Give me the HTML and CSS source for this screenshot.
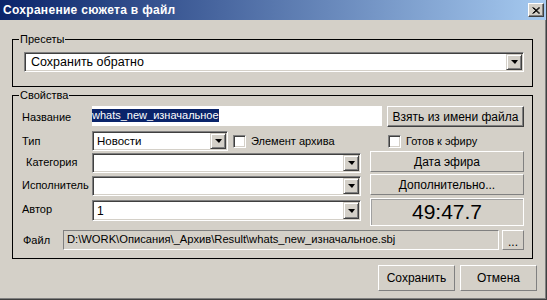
FILE: index.html
```html
<!DOCTYPE html>
<html lang="ru">
<head>
    <meta charset="UTF-8">
    <title>Сохранение сюжета в файл</title>
    <link rel="stylesheet" href="styles.css">
</head>
<body>
    <div class="window">
        <!-- заголовок окна -->
        <div class="titlebar">
            <span class="title">Сохранение сюжета в файл</span>
            <span class="close">
                <svg width="8" height="7" viewBox="0 0 8 7"><path d="M0.5 0.5 L7 6.5 M1.5 0.5 L8 6.5 M7 0.5 L0.5 6.5 M8 0.5 L1.5 6.5" stroke="#000" stroke-width="1"/></svg>
            </span>
        </div>
        <div class="content">
            <!-- пресеты -->
            <fieldset class="group presets">
                <legend>Пресеты</legend>
                <div class="group-body presets-body">
                    <div class="combo combo-preset">
                        <span class="val">Сохранить обратно</span>
                        <span class="drop"><i></i></span>
                    </div>
                </div>
            </fieldset>
            <!-- свойства -->
            <fieldset class="group props">
                <legend>Свойства</legend>
                <div class="group-body props-body">
                    <div class="row r1">
                        <span class="lbl">Название</span>
                        <div class="textbox"><span class="sel">whats_new_изначальное</span></div>
                        <button class="btn btn-raised btn-name">Взять из имени файла</button>
                    </div>
                    <div class="row r2">
                        <span class="lbl">Тип</span>
                        <div class="r2-mid">
                            <div class="combo combo-type">
                                <span class="val">Новости</span>
                                <span class="drop"><i></i></span>
                            </div>
                            <span class="check"></span>
                            <span class="check-lbl">Элемент архива</span>
                        </div>
                        <div class="r2-right">
                            <span class="check"></span>
                            <span class="check-lbl">Готов к эфиру</span>
                        </div>
                    </div>
                    <div class="row r3">
                        <span class="lbl lbl-cat">Категория</span>
                        <div class="combo combo-long">
                            <span class="val"></span>
                            <span class="drop"><i></i></span>
                        </div>
                        <button class="btn btn-side">Дата эфира</button>
                    </div>
                    <div class="row r4">
                        <span class="lbl">Исполнитель</span>
                        <div class="combo combo-long">
                            <span class="val"></span>
                            <span class="drop"><i></i></span>
                        </div>
                        <button class="btn btn-side">Дополнительно...</button>
                    </div>
                    <div class="row r5">
                        <span class="lbl lbl-author">Автор</span>
                        <div class="combo combo-long">
                            <span class="val">1</span>
                            <span class="drop"><i></i></span>
                        </div>
                        <div class="timer">49:47.7</div>
                    </div>
                    <div class="row r6">
                        <span class="lbl lbl-file">Файл</span>
                        <div class="path">D:\WORK\Описания\_Архив\Result\whats_new_изначальное.sbj</div>
                        <button class="btn btn-dots">...</button>
                    </div>
                </div>
            </fieldset>
            <div class="actions">
                <button class="btn btn-bottom">Сохранить</button>
                <button class="btn btn-bottom">Отмена</button>
            </div>
        </div>
    </div>
</body>
</html>
```

FILE: styles.css
```css
/* диалог в классическом стиле windows */
*{
    box-sizing: border-box;
}
body{
    margin: 0;
    background: #d4d0c8;
    font-family: "Liberation Sans", Arial, sans-serif;
    font-size: 12px;
    color: #000;
}
.window{
    width: 547px;
    height: 300px;
    background: #d4d0c8;
    border-right: 1px solid #404040;
    border-bottom: 1px solid #404040;
    box-shadow: inset -1px -1px 0 #808080;
}

/* заголовок */
.titlebar{
    height: 20px;
    width: 546px;
    padding: 0 2px 0 3px;
    display: flex;
    align-items: center;
    justify-content: space-between;
    background: linear-gradient(to right, #0a246a, #a6caf0);
}
.title{
    color: #fff;
    font-weight: bold;
    font-size: 12px;
    letter-spacing: 0.3px;
}
.close{
    width: 16px;
    height: 14px;
    display: flex;
    align-items: center;
    justify-content: center;
    background: #d4d0c8;
    border: 1px solid;
    border-color: #fff #404040 #404040 #fff;
    box-shadow: inset -1px -1px 0 #808080;
}

.content{
    padding: 12px 0 0 12px;
}

/* групбоксы */
.group{
    margin: 0;
    padding: 0;
    width: 521px;
    min-width: 0;
    border: 1px solid #000;
}
.group legend{
    margin-left: 6px;
    padding: 0 1px;
    font-size: 11px;
    line-height: 14px;
}
.presets-body{
    padding: 6px 8px 14px 11px;
}
.props{
    margin-top: 1px;
}
.props-body{
    padding: 4px 8px 8px 9px;
}

/* строки */
.row{
    display: flex;
}
.lbl{
    width: 70px;
    flex: none;
    font-size: 11px;
    align-self: center;
}
.lbl-cat{
    padding-left: 4px;
}
.lbl-author{
    align-self: flex-start;
    margin-top: 5px;
}
.lbl-file{
    width: 41px;
    padding-left: 1px;
}
.r1{
    height: 21px;
    gap: 5px;
}
.r1 .lbl{
    margin-right: -5px;
}
.r2{
    height: 20px;
    margin-top: 4px;
}
.r2-mid{
    flex: 1;
    display: flex;
    align-items: center;
}
.r2-right{
    width: 137px;
    padding-left: 1px;
    display: flex;
    align-items: center;
}
.r3{
    height: 22px;
}
.r4{
    height: 23px;
}
.r3 .combo, .r4 .combo{
    align-self: flex-end;
}
.r4 .btn-side{
    margin-top: 1px;
}
.r5{
    height: 28px;
    margin-top: 2px;
}
.r5 .combo{
    height: 21px;
    margin-top: 2px;
}
.r6{
    height: 20px;
    margin-top: 4px;
}

/* поля */
.textbox{
    width: 290px;
    height: 20px;
    background: #fff;
    padding: 2px 0 0 0;
}
.sel{
    display: inline-block;
    background: #0a246a;
    color: #fff;
    line-height: 13px;
    font-size: 11px;
}
.combo{
    display: flex;
    align-items: center;
    height: 20px;
    background: #fff;
    border: 1px solid;
    border-color: #808080 #fff #fff #808080;
    box-shadow: inset 1px 1px 0 #404040, inset -1px -1px 0 #d4d0c8;
    padding: 1px 1px 1px 2px;
}
.combo .val{
    flex: 1;
    padding-left: 2px;
}
.combo-preset{
    width: 500px;
}
.combo-preset .val{
    padding-left: 4px;
    font-size: 12.5px;
}
.combo-type{
    width: 136px;
}
.combo-type .val{
    font-size: 11.5px;
}
.combo-long{
    width: 269px;
    margin-right: 9px;
}
.drop{
    width: 16px;
    height: 100%;
    display: flex;
    align-items: center;
    justify-content: center;
    background: #d4d0c8;
    border: 1px solid;
    border-color: #d4d0c8 #404040 #404040 #d4d0c8;
    box-shadow: inset 1px 1px 0 #fff, inset -1px -1px 0 #808080;
}
.drop i{
    width: 0;
    height: 0;
    border-top: 4px solid #000;
    border-left: 4px solid transparent;
    border-right: 3px solid transparent;
}
.check{
    width: 13px;
    height: 13px;
    flex: none;
    background: #fff;
    border: 1px solid;
    border-color: #808080 #fff #fff #808080;
    box-shadow: inset 1px 1px 0 #404040, inset -1px -1px 0 #d4d0c8;
}
.combo-type + .check{
    margin-left: 5px;
}
.check-lbl{
    font-size: 11px;
    margin-left: 5px;
}
.path{
    width: 436px;
    height: 20px;
    margin-right: 3px;
    padding: 2px 0 0 3px;
    font-size: 11.2px;
    white-space: nowrap;
    overflow: hidden;
    border: 1px solid;
    border-color: #808080 #fff #fff #808080;
}
.timer{
    width: 154px;
    height: 28px;
    display: flex;
    align-items: center;
    justify-content: center;
    font-size: 21px;
    border: 1px solid #fff;
    box-shadow: inset 1px 1px 0 #a0a0a0;
}

/* кнопки */
.btn{
    font-family: inherit;
    font-size: 12px;
    color: #000;
    background: #d4d0c8;
    padding: 0;
    margin: 0;
    border: 1px solid;
    border-color: #fff #808080 #808080 #fff;
}
.btn-raised{
    border-color: #fff #404040 #404040 #fff;
    box-shadow: inset -1px -1px 0 #808080;
}
.btn-name{
    width: 137px;
    height: 21px;
}
.btn-side{
    width: 154px;
    height: 21px;
}
.btn-dots{
    width: 22px;
    height: 20px;
    padding-top: 4px;
}
.actions{
    display: flex;
    justify-content: flex-end;
    gap: 5px;
    margin-top: 6px;
    padding-right: 9px;
}
.btn-bottom{
    width: 77px;
    height: 26px;
}
```
